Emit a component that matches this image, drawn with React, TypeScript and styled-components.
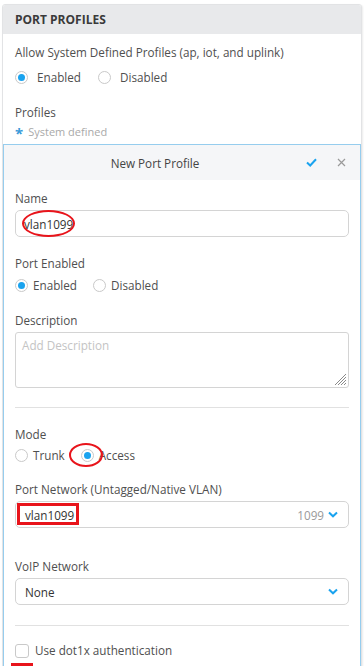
import styled, { createGlobalStyle } from "styled-components";

const GlobalStyle = createGlobalStyle`
  body {
    margin: 0;
    background: #fff;
    font-family: "Open Sans", "Noto Sans", sans-serif;
    color: #4a4a4a;
  }
  * { box-sizing: border-box; }
`;

const Panel = styled.section`
  margin: 4px 2px 0 2px;
  border: 1px solid #e2e3e5;
  border-radius: 3px 3px 0 0;
  box-shadow: 1px 1px 2px rgba(0, 0, 0, 0.08);
  background: #fff;
  overflow: hidden;
`;

const PanelHeader = styled.div`
  height: 29px;
  background: #e8e9eb;
  padding: 0 12px;
  display: flex;
  align-items: center;
  font-size: 12px;
  font-weight: 700;
  color: #3a3a3a;
`;

const Body = styled.div`
  padding: 10px 12px 3px;
`;

const Label = styled.div`
  font-size: 11.7px;
  color: #4f4f4f;
  line-height: 17px;
`;

const RadioRow = styled.div<{ $gap?: number; $mt?: number }>`
  display: flex;
  align-items: center;
  gap: ${(p) => p.$gap ?? 16}px;
  margin-top: ${(p) => p.$mt ?? 5}px;
  position: relative;
`;

const RadioItem = styled.label<{ $space?: number }>`
  display: flex;
  align-items: center;
  gap: ${(p) => p.$space ?? 5}px;
  font-size: 11.7px;
  line-height: 17px;
  color: #4f4f4f;
`;

const Circle = styled.span<{ $on?: boolean }>`
  width: 13px;
  height: 13px;
  border-radius: 50%;
  border: 1px solid #c9c9c9;
  background: #fff;
  display: inline-flex;
  align-items: center;
  justify-content: center;
  &::after {
    content: "";
    width: 7px;
    height: 7px;
    border-radius: 50%;
    background: ${(p) => (p.$on ? "#1aa3ef" : "transparent")};
  }
`;

const Hint = styled.div`
  font-size: 11px;
  line-height: 16px;
  color: #a9a9a9;
  display: flex;
  align-items: center;
  gap: 5px;
  margin-top: 1px;
  span.star {
    color: #3a9ad9;
    font-size: 15px;
    font-weight: 700;
    line-height: 1;
    padding-top: 4px;
  }
`;

const Section = styled.div<{ $mt?: number }>`
  margin-top: ${(p) => p.$mt ?? 0}px;
`;

const Inner = styled.div`
  border: 1px solid #96cdee;
  border-bottom: none;
`;

const InnerHeader = styled.div`
  height: 35px;
  background: #f5f6f8;
  display: flex;
  align-items: center;
`;

const InnerTitle = styled.div`
  flex: 1;
  text-align: center;
  font-size: 11.7px;
  color: #444;
`;

const HeaderActions = styled.div`
  display: flex;
  align-items: center;
  gap: 20px;
  padding: 0 14px 0 0;
`;

const Form = styled.div`
  padding: 10px 11px 24px;
`;

const Input = styled.div`
  margin-top: 3px;
  height: 27px;
  border: 1px solid #d4d4d4;
  border-radius: 5px;
  display: flex;
  align-items: center;
  padding: 0 8px;
  font-size: 11.7px;
  color: #333;
  position: relative;
`;

const TextArea = styled.div`
  margin-top: 3px;
  height: 56px;
  border: 1px solid #d4d4d4;
  border-radius: 3px;
  padding: 4px 6px;
  font-size: 11.7px;
  color: #c4c4c4;
  position: relative;
`;

const Grip = styled.svg`
  position: absolute;
  right: 1px;
  bottom: 1px;
`;

const Divider = styled.hr<{ $mt?: number }>`
  border: none;
  border-top: 1px solid #e1e1e1;
  margin: ${(p) => p.$mt ?? 19}px 0 0;
`;

const SelectBox = styled(Input)`
  justify-content: space-between;
  padding: 0 10px 0 9px;
`;

const SelectRight = styled.div`
  display: flex;
  align-items: center;
  gap: 4px;
  color: #9a9a9a;
`;

const Ellipse = styled.span`
  position: absolute;
  border: 2px solid #e8141b;
  border-radius: 50%;
`;

const RedBox = styled.span`
  position: absolute;
  border: 3px solid #e8141b;
`;

const CheckRow = styled.label`
  display: flex;
  align-items: center;
  gap: 6px;
  font-size: 11.7px;
  line-height: 17px;
  color: #4f4f4f;
  margin-top: 16px;
  position: relative;
`;

const CheckBox = styled.span`
  width: 14px;
  height: 14px;
  border: 1px solid #c9c9c9;
  border-radius: 3px;
`;

const RedBar = styled.span`
  position: absolute;
  left: -4px;
  top: 21px;
  width: 22px;
  height: 5px;
  background: #e8141b;
`;

const Chevron = () => (
  <svg width="10" height="7" viewBox="0 0 10 7">
    <path d="M1 1.5 L5 5.3 L9 1.5" fill="none" stroke="#1aa3ef" strokeWidth="2" />
  </svg>
);

export default function App() {
  return (
    <>
      <GlobalStyle />
      <Panel>
        <PanelHeader>PORT PROFILES</PanelHeader>
        <Body>
          <Label>Allow System Defined Profiles (ap, iot, and uplink)</Label>
          <RadioRow $gap={17} $mt={8}>
            <RadioItem $space={9}>
              <Circle $on />
              Enabled
            </RadioItem>
            <RadioItem $space={9}>
              <Circle />
              Disabled
            </RadioItem>
          </RadioRow>
          <Section $mt={18}>
            <Label>Profiles</Label>
            <Hint>
              <span className="star">*</span>System defined
            </Hint>
          </Section>
        </Body>
        <Inner>
          <InnerHeader>
            <InnerTitle>New Port Profile</InnerTitle>
            <HeaderActions>
              <svg width="11" height="9" viewBox="0 0 11 9">
                <path d="M1 4.5 L4.2 7.5 L10 1.3" fill="none" stroke="#1aa3ef" strokeWidth="2" />
              </svg>
              <svg width="9" height="9" viewBox="0 0 9 9">
                <path d="M1 1 L8 8 M8 1 L1 8" stroke="#9a9a9a" strokeWidth="1.2" />
              </svg>
            </HeaderActions>
          </InnerHeader>
          <Form>
            <Label>Name</Label>
            <Input>
              vlan1099
              <Ellipse style={{ left: 6, top: -1, width: 53, height: 27 }} />
            </Input>
            <Section $mt={18}>
              <Label>Port Enabled</Label>
              <RadioRow>
                <RadioItem>
                  <Circle $on />
                  Enabled
                </RadioItem>
                <RadioItem>
                  <Circle />
                  Disabled
                </RadioItem>
              </RadioRow>
            </Section>
            <Section $mt={18}>
              <Label>Description</Label>
              <TextArea>
                Add Description
                <Grip width="12" height="12" viewBox="0 0 12 12">
                  <path d="M11 3 L3 11 M11 6 L6 11 M11 9 L9 11 M11 0 L0 11" stroke="#8a8a8a" strokeWidth="1" />
                </Grip>
              </TextArea>
            </Section>
            <Divider />
            <Section $mt={18}>
              <Label>Mode</Label>
              <RadioRow $mt={4}>
                <RadioItem>
                  <Circle />
                  Trunk
                </RadioItem>
                <RadioItem>
                  <Circle $on />
                  Access
                </RadioItem>
                <Ellipse style={{ left: 54, top: -4, width: 34, height: 24 }} />
              </RadioRow>
            </Section>
            <Section $mt={17}>
              <Label>Port Network (Untagged/Native VLAN)</Label>
              <SelectBox>
                vlan1099
                <SelectRight>
                  1099
                  <Chevron />
                </SelectRight>
                <RedBox style={{ left: 1, top: 1, width: 62, height: 22 }} />
              </SelectBox>
            </Section>
            <Section $mt={30}>
              <Label>VoIP Network</Label>
              <SelectBox>
                <span>None</span>
                <SelectRight>
                  <Chevron />
                </SelectRight>
              </SelectBox>
            </Section>
            <Divider $mt={20} />
            <CheckRow>
              <CheckBox />
              Use dot1x authentication
              <RedBar />
            </CheckRow>
          </Form>
        </Inner>
      </Panel>
    </>
  );
}
